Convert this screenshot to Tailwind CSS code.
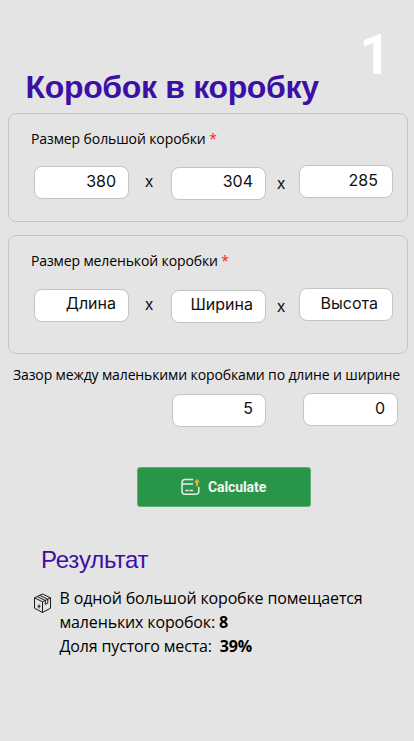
<!DOCTYPE html>
<html lang="ru">
<head>
<meta charset="utf-8">
<title>Коробок в коробку</title>
<script src="https://cdn.jsdelivr.net/npm/@tailwindcss/browser@4"></script>
</head>
<body class="bg-[#e4e4e4]">
<main class="flex h-[741px] w-[414px] flex-col overflow-hidden bg-[#e4e4e4] font-['Open_Sans',sans-serif] text-black">
  <header class="flex h-[113px] shrink-0 items-start justify-between pl-[25.5px] pr-[23px] whitespace-nowrap">
    <h1 class="mt-[68px] font-['Liberation_Sans',sans-serif] text-[32px] leading-[38px] font-bold tracking-[-0.33px] text-[#3c10a5]">Коробок в коробку</h1>
    <span class="mt-[23px] font-['Roboto',sans-serif] text-[55px] leading-[64px] font-bold text-white">1</span>
  </header>

  <section class="ml-[7.5px] h-[109px] w-[400px] shrink-0 rounded-[8px] border border-[#c4c4c4] pl-[22.5px] pt-[15px]">
    <h2 class="text-[14px] leading-[20px] tracking-[-0.1px] whitespace-nowrap">Размер большой коробки <span class="text-[#ff1a1a]">*</span></h2>
    <div class="mt-4 ml-[3px] flex items-start font-['Inter',sans-serif] text-[16px] leading-[28px] text-[#111]">
      <div class="mt-px h-[33px] w-[95px] rounded-[8px] border border-[#c4c4c4] bg-white pr-3 text-right">380</div>
      <span class="mt-[2px] w-[42px] pr-[2px] text-center">x</span>
      <div class="mt-[2px] h-[33px] w-[95px] rounded-[8px] border border-[#c4c4c4] bg-white pr-3 text-right leading-[27px]">304</div>
      <span class="mt-[4px] w-[33px] pr-[3px] text-center">x</span>
      <div class="h-[33px] w-[94px] rounded-[8px] border border-[#c4c4c4] bg-white pr-[14px] text-right">285</div>
    </div>
  </section>

  <section class="mt-[13px] ml-[7.5px] h-[119px] w-[400px] shrink-0 rounded-[8px] border border-[#c4c4c4] pl-[22.5px] pt-[15px]">
    <h2 class="text-[14px] leading-[20px] tracking-[-0.12px] whitespace-nowrap">Размер меленькой коробки <span class="text-[#ff1a1a]">*</span></h2>
    <div class="mt-[17px] ml-[3px] flex items-start font-['Inter',sans-serif] text-[16px] leading-[28px] text-[#111]">
      <div class="mt-px h-[33px] w-[95px] rounded-[8px] border border-[#c4c4c4] bg-white pr-3 text-right leading-[27px]">Длина</div>
      <span class="mt-[2px] w-[42px] pr-[2px] text-center">x</span>
      <div class="mt-[2px] h-[33px] w-[95px] rounded-[8px] border border-[#c4c4c4] bg-white pr-3 text-right leading-[27px]">Ширина</div>
      <span class="mt-[4px] w-[33px] pr-[3px] text-center">x</span>
      <div class="h-[33px] w-[94px] rounded-[8px] border border-[#c4c4c4] bg-white pr-[14px] text-right">Высота</div>
    </div>
  </section>

  <section class="mt-[11px] shrink-0">
    <h2 class="pl-[13px] text-[14px] leading-[20px] tracking-[-0.125px] whitespace-nowrap">Зазор между маленькими коробками по длине и ширине</h2>
    <div class="mt-[8px] flex items-start gap-[37px] pl-[172px] font-['Inter',sans-serif] text-[16px] leading-[28px] text-[#111]">
      <div class="mt-px h-[33px] w-[94px] rounded-[8px] border border-[#c4c4c4] bg-white pr-3 text-right leading-[27px]">5</div>
      <div class="h-[33px] w-[95px] rounded-[8px] border border-[#c4c4c4] bg-white pr-3 text-right">0</div>
    </div>
  </section>

  <button class="mt-[40px] ml-[137px] flex h-[40px] w-[174px] shrink-0 items-center gap-[8px] rounded-[3px] border border-[#5cb074] bg-[#289548] pl-[43px] font-['Roboto',sans-serif] text-[14px] font-bold tracking-[-0.1px] text-[#f1f7f2]">
    <svg class="h-5 w-[19px]" viewBox="0 0 19 20" fill="none" stroke="#e5f2e8" stroke-width="1.5" stroke-linecap="round">
      <path d="M11.500 2.500H4.200Q1 2.500 1 5.800v8.100Q1 17.200 4.200 17.200h10.400Q17.800 17.200 17.800 13.900V10.500M1.500 7H11.500M5 13.500h2M9 13.500h2.500"/>
      <path d="M16 8.500V4" stroke="#f5ad42" stroke-width="1.800"/>
      <path d="M13.800 5 16 2.300 18.200 5z" stroke="#f5ad42" stroke-width="0.600" fill="#f5ad42"/>
    </svg>
    <span>Calculate</span>
  </button>

  <section class="mt-[38px] shrink-0">
    <h2 class="pl-[41px] font-['Liberation_Sans',sans-serif] text-[24px] leading-[30px] tracking-[-0.2px] text-[#3c10a5]">Результат</h2>
    <div class="mt-[12px] flex items-start gap-[7.5px] pl-[33px]">
      <svg class="mt-[6px] h-[21px] w-[19px] shrink-0" viewBox="0 0 19 21" fill="none" stroke="#1a1a1a" stroke-width="1" stroke-linejoin="round">
        <path d="M9.500 1 17.500 4.800v10.400L9.500 19.500 1.500 15.200V4.800zM1.500 4.800l8 4 8-4M9.500 8.800v10.700M4.200 3.500l8 4M6.700 2.300l8 4M12.300 7.500v3.800l2.500-1.200V6.200"/>
        <path d="M6 11.500v4M4.500 13.300h3"/>
      </svg>
      <div class="text-[16px] leading-[23.800px] tracking-[-0.15px] whitespace-nowrap">
        <p>В одной большой коробке помещается</p>
        <p>маленьких коробок: <b>8</b></p>
        <p>Доля пустого места:&nbsp; <b>39%</b></p>
      </div>
    </div>
  </section>
</main>
</body>
</html>
